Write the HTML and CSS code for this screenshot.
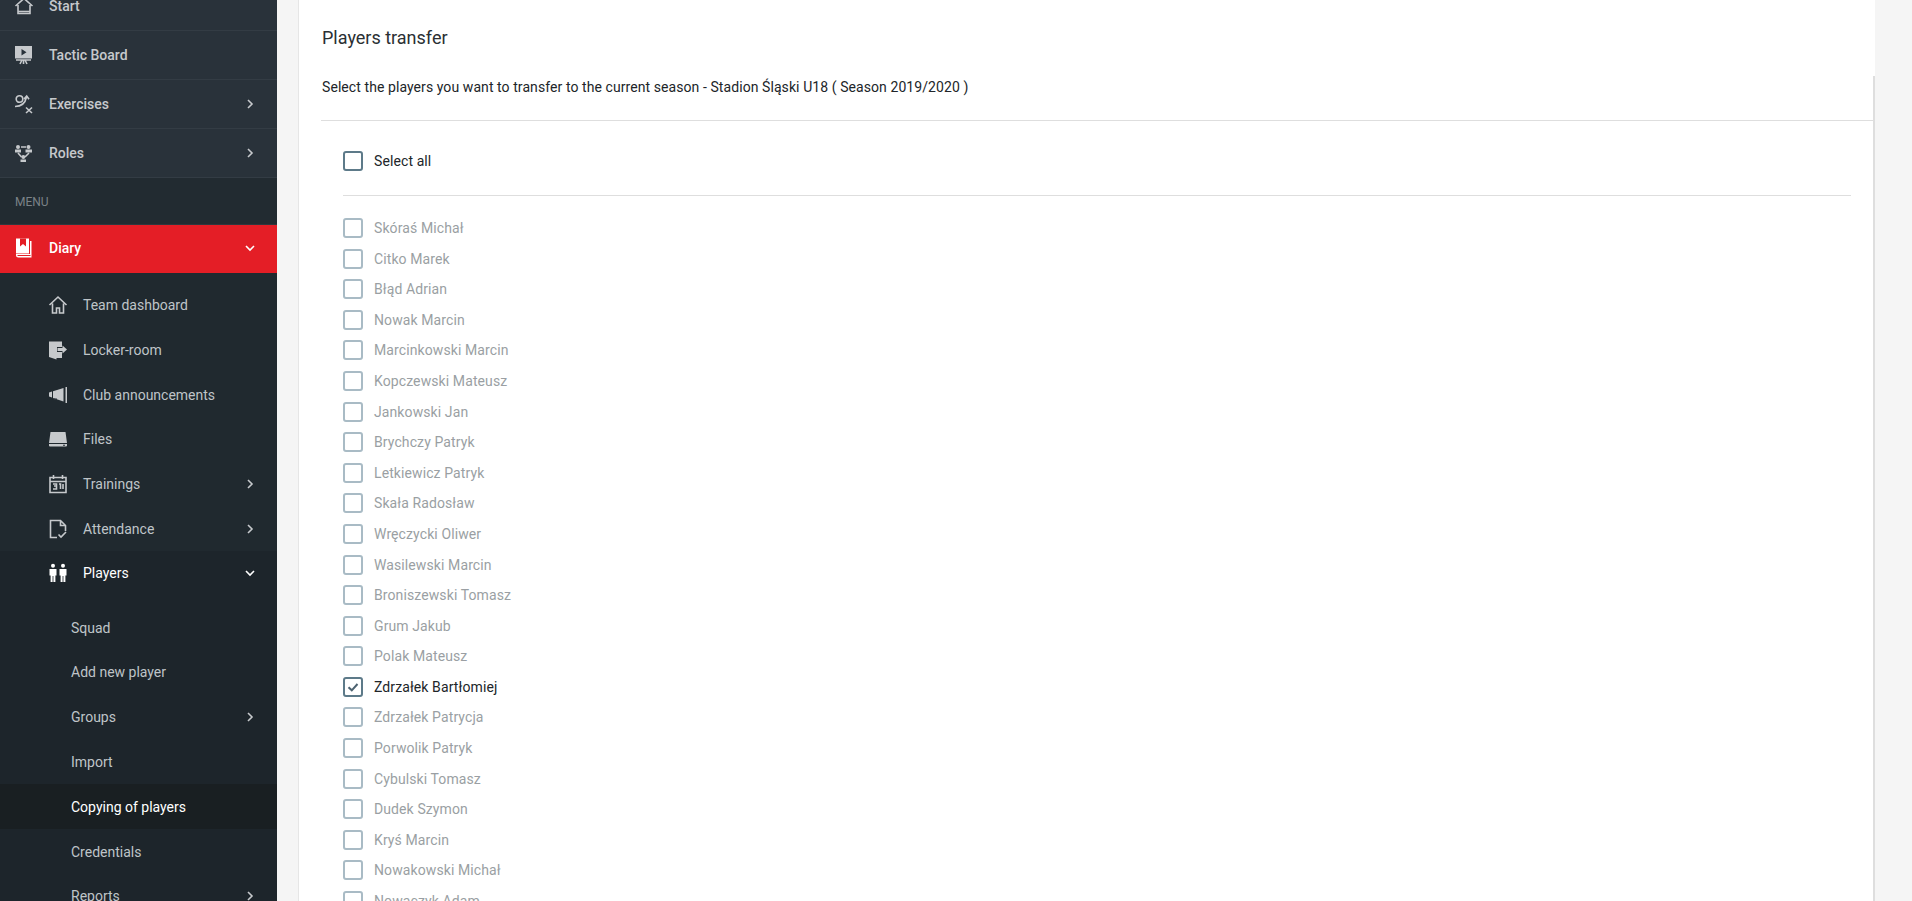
FILE: index.html
```html
<!DOCTYPE html>
<html lang="en">
<head>
<meta charset="utf-8">
<title>Players transfer</title>
<link rel="stylesheet" href="styles.css">
</head>
<body>
<div class="app">
  <nav class="sidebar">
    <a class="top-row first-row">
      <svg class="ic" viewBox="0 0 20 20"><path class="ln" d="M1.500 10 10 2.500 18.500 10M4 9v8.500h12V9"/><path class="ln" d="M4 15.500h12" stroke-width="1"/></svg>
      <span>Start</span>
    </a>
    <a class="top-row">
      <svg class="ic" viewBox="0 0 20 20"><path class="fl" d="M1 1h17v12.500H1z"/><path class="cut" d="M7.500 4 12.500 7.300 7.500 10.500z"/><path class="ln" d="M2 15h15M6 19l2-4M13 19l-2-4M9.500 15v4" stroke-width="1.200"/></svg>
      <span>Tactic Board</span>
    </a>
    <a class="top-row">
      <svg class="ic" viewBox="0 0 20 20"><circle class="ln" cx="5.500" cy="5" r="3.300" stroke-width="1.300"/><path class="ln" d="M1 12.500c5 0 10-2 11.500-9.500M10 5l2.700-3 2.300 3.300M12 13.500l6 5.500M18 13.500l-6 5.500" stroke-width="1.300"/></svg>
      <span>Exercises</span>
      <svg class="chev" viewBox="0 0 14 14"><path d="M5 3l4 4-4 4"/></svg>
    </a>
    <a class="top-row">
      <svg class="ic" viewBox="0 0 20 20"><circle class="fl" cx="4" cy="4" r="2"/><circle class="fl" cx="14.500" cy="4" r="2"/><circle class="fl" cx="9.300" cy="14" r="2"/><path class="fl" d="M1 6.500h6V9.500H1zM11.500 6.500h6.500V9.500h-6.500zM6.500 16.500h5.500V19H6.500z"/><path class="ln" d="M7 4h5M4 10 7.500 14M15 10 11 14" stroke-width="1.300"/></svg>
      <span>Roles</span>
      <svg class="chev" viewBox="0 0 14 14"><path d="M5 3l4 4-4 4"/></svg>
    </a>
    <div class="menu-label">MENU</div>
    <a class="diary-row">
      <svg class="ic" viewBox="0 0 20 20"><path class="white" d="M2 .5h13v15H2z"/><path class="red" d="M6 .5h6v8l-3-2.500-3 2.500z"/><path class="white" d="M16 3h1.500v16.500H4.500A2.500 2.500 0 0 1 2 17v-1h14z"/><path class="red" d="M3.500 17h13v1h-13z"/></svg>
      <span>Diary</span>
      <svg class="chev chev-open" viewBox="0 0 14 14"><path d="M3 5l4 4 4-4"/></svg>
    </a>
    <div class="submenu">
      <a class="sub-row">
        <svg class="ic" viewBox="0 0 20 20"><path class="ln" d="M1.500 10 10 2l8.500 8M4.500 8.500V18h4v-5h3v5h4V8.500" stroke-width="1.400"/></svg>
        <span>Team dashboard</span>
      </a>
      <a class="sub-row">
        <svg class="ic" viewBox="0 0 20 20"><path class="fl" d="M1 1.500h13V7H9v5h5v6H8.500v1.500L1 17z"/><path class="fl" d="M9.500 8h5V5.500L19 9.500l-4.500 4V11h-5z"/></svg>
        <span>Locker-room</span>
      </a>
      <a class="sub-row">
        <svg class="ic" viewBox="0 0 20 20"><path class="fl" d="M1 7.500 4 6.500v6L1 11.500zM5 6.300 15.500 3v13.500L5 13zM17.500 2H19v16h-1.500z"/><path class="cut" d="M6 13.500h3v1.500H6z"/></svg>
        <span>Club announcements</span>
      </a>
      <a class="sub-row">
        <svg class="ic" viewBox="0 0 20 20"><path class="fl" d="M2.500 3h15L19 14H1zM1 15h18v1.500a1 1 0 0 1-1 1H2a1 1 0 0 1-1-1z"/><path class="cut" d="M15 15.700h2v1h-2z"/></svg>
        <span>Files</span>
      </a>
      <a class="sub-row">
        <svg class="ic" viewBox="0 0 20 20"><path class="ln" d="M2 3.500h16v15H2zM2 7.500h16M5.500 1v4M14.500 1v4" stroke-width="1.300"/><path class="ln" d="M5 10h3.500v2H6h2.500v3H5M11 10h1.500v5M15 10v5" stroke-width="1.200"/></svg>
        <span>Trainings</span>
        <svg class="chev" viewBox="0 0 14 14"><path d="M5 3l4 4-4 4"/></svg>
      </a>
      <a class="sub-row">
        <svg class="ic" viewBox="0 0 20 20"><path class="ln" d="M9 18.500H2.500v-17h10l5 5V12M12.500 1.500V6.500h5" stroke-width="1.200"/><path class="ln" d="M10.500 15.500l2.500 2.500 5-5" stroke-width="1.700"/></svg>
        <span>Attendance</span>
        <svg class="chev" viewBox="0 0 14 14"><path d="M5 3l4 4-4 4"/></svg>
      </a>
      <div class="players-group">
        <a class="sub-row bright">
          <svg class="ic" viewBox="0 0 20 20"><circle class="white" cx="5" cy="2.800" r="2"/><circle class="white" cx="15" cy="2.800" r="2"/><path class="white" d="M1.500 6h7v6.500H7.400V19H5.400v-6h-.8v6H2.600v-6.500H1.500zM11.500 6h7v6.500h-1.100V19h-2v-6h-.8v6h-2v-6.500h-1.100z"/></svg>
          <span>Players</span>
          <svg class="chev chev-open" viewBox="0 0 14 14"><path d="M3 5l4 4 4-4"/></svg>
        </a>
        <div class="nested">
          <a class="nest-row">Squad</a>
          <a class="nest-row">Add new player</a>
          <a class="nest-row">Groups<svg class="chev" viewBox="0 0 14 14"><path d="M5 3l4 4-4 4"/></svg></a>
          <a class="nest-row">Import</a>
          <a class="nest-row active">Copying of players</a>
          <a class="nest-row">Credentials</a>
          <a class="nest-row">Reports<svg class="chev" viewBox="0 0 14 14"><path d="M5 3l4 4-4 4"/></svg></a>
        </div>
      </div>
    </div>
  </nav>

  <main class="main">
    <section class="card">
      <header class="card-head"><h1>Players transfer</h1></header>
      <div class="card-body">
        <p class="lead">Select the players you want to transfer to the current season - Stadion Śląski U18 ( Season 2019/2020 )</p>
        <div class="picker">
          <label class="select-all"><i class="box"></i>Select all</label>
          <ul class="players">
            <li><i class="box"></i>Skóraś Michał</li>
            <li><i class="box"></i>Citko Marek</li>
            <li><i class="box"></i>Błąd Adrian</li>
            <li><i class="box"></i>Nowak Marcin</li>
            <li><i class="box"></i>Marcinkowski Marcin</li>
            <li><i class="box"></i>Kopczewski Mateusz</li>
            <li><i class="box"></i>Jankowski Jan</li>
            <li><i class="box"></i>Brychczy Patryk</li>
            <li><i class="box"></i>Letkiewicz Patryk</li>
            <li><i class="box"></i>Skała Radosław</li>
            <li><i class="box"></i>Wręczycki Oliwer</li>
            <li><i class="box"></i>Wasilewski Marcin</li>
            <li><i class="box"></i>Broniszewski Tomasz</li>
            <li><i class="box"></i>Grum Jakub</li>
            <li><i class="box"></i>Polak Mateusz</li>
            <li class="checked"><i class="box"><svg viewBox="0 0 16 16"><path d="M3.500 8.200 6.800 11.300 12.500 5"/></svg></i>Zdrzałek Bartłomiej</li>
            <li><i class="box"></i>Zdrzałek Patrycja</li>
            <li><i class="box"></i>Porwolik Patryk</li>
            <li><i class="box"></i>Cybulski Tomasz</li>
            <li><i class="box"></i>Dudek Szymon</li>
            <li><i class="box"></i>Kryś Marcin</li>
            <li><i class="box"></i>Nowakowski Michał</li>
            <li><i class="box"></i>Nowaczyk Adam</li>
          </ul>
        </div>
      </div>
    </section>
  </main>
</div>
</body>
</html>
```

FILE: styles.css
```css
* { box-sizing: border-box; }
html, body { margin: 0; height: 100%; overflow: hidden; }
body {
  font-family: Roboto, "Liberation Sans", sans-serif;
  font-size: 14px;
  color: #212529;
  background: #f5f5f5;
}
.app { display: flex; height: 901px; overflow: hidden; }

/* Sidebar */
.sidebar {
  width: 277px;
  flex: none;
  height: 901px;
  overflow: hidden;
  background: #20292f;
  color: #bfc4c8;
}
.top-row, .diary-row, .sub-row, .nest-row { display: flex; align-items: center; }
.top-row {
  height: 49px;
  padding: 0 20px 0 14px;
  background: #29323a;
  border-bottom: 1px solid #333c44;
  font-weight: 500;
  color: #c6c9cc;
}
.first-row { margin-top: -18px; }
.top-row span, .diary-row span { margin-left: 15px; flex: 1; }
.menu-label {
  height: 47px;
  padding: 2px 0 0 15px;
  display: flex;
  align-items: center;
  font-size: 12px;
  color: #7b8287;
  background: #222b31;
  border-bottom: 1px solid #2e373e;
}
.diary-row {
  height: 48px;
  padding: 0 20px 2px 14px;
  background: #e41e26;
  color: #fff;
  font-weight: 500;
}
.submenu { padding-top: 9.700px; }
.sub-row {
  height: 44.800px;
  padding: 0 20px 0 48px;
}
.sub-row span { margin-left: 15px; flex: 1; }
.players-group { background: #1d252b; }
.bright { color: #fff; height: 44px; }
.nested { padding-top: 9.700px; }
.nest-row {
  height: 44.800px;
  padding: 0 20px 0 71px;
  justify-content: space-between;
}
.active { background: #191f22; color: #fff; }

.ic { width: 20px; height: 20px; flex: none; }
.ln { fill: none; stroke: #c6c9cc; stroke-width: 1.600; }
.fl { fill: #c6c9cc; }
.cut { fill: #29323a; }
.white { fill: #fff; }
.red { fill: #e41e26; }
.chev { width: 14px; height: 14px; flex: none; fill: none; stroke: #c6c9cc; stroke-width: 1.600; }
.chev-open { stroke: #fff; }

/* Main */
.main { flex: 1; min-width: 0; padding: 0 37px 0 21px; }
.card {
  background: #fff;
  border-left: 1px solid #e6e6e6;
  height: 901px;
  overflow: hidden;
}
.card-head { height: 76px; padding: 28px 0 0 23px; }
.card-head h1 {
  margin: 0;
  font-size: 18px;
  font-weight: 400;
  line-height: 20px;
  color: #2a2f33;
}
.card-body { border-right: 2px solid #dedede; height: 825px; }
.lead {
  margin: 0 0 0 22px;
  height: 44.500px;
  padding: 2px 0 0 1px;
  line-height: 18px;
  border-bottom: 1px solid #dedede;
  color: #212529;
  letter-spacing: .077px;
}
.picker { padding: 0 22px 0 44px; }
.select-all {
  height: 75px;
  padding-top: 7px;
  display: flex;
  align-items: center;
  border-bottom: 1px solid #dedede;
  color: #212529;
  letter-spacing: .1px;
}
.box {
  width: 20px;
  height: 20px;
  flex: none;
  margin-right: 11px;
  border: 2px solid #5d7a89;
  border-radius: 3px;
  display: flex;
  align-items: center;
  justify-content: center;
}
.box svg { width: 16px; height: 16px; fill: none; stroke: #4c6270; stroke-width: 2; }
.players { list-style: none; margin: 0; padding: 17.200px 0 0; }
.players li {
  height: 30.600px;
  display: flex;
  align-items: center;
  color: #9a9fa3;
  letter-spacing: .1px;
}
.players li .box { border-color: #a9bbc5; }
.players li.checked { color: #212529; }
.players li.checked .box { border-color: #5d7a89; }
```
